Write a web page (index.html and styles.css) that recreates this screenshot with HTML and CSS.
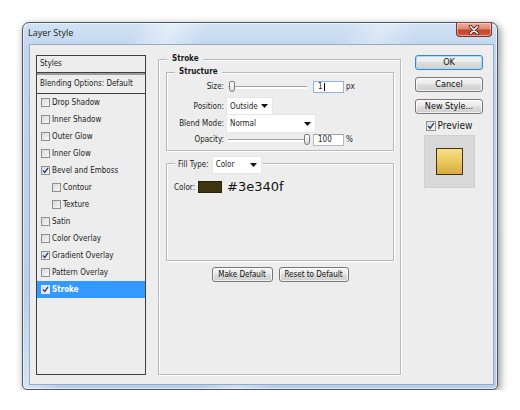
FILE: index.html
```html
<!DOCTYPE html>
<html lang="en">
<head>
<meta charset="utf-8">
<title>Layer Style</title>
<link rel="stylesheet" href="styles.css">
</head>
<body>
<div class="desk">
  <div class="window">
    <div class="titlebar">
      <span class="title">Layer Style</span>
      <button class="close" aria-label="Close">
        <svg width="12" height="10" viewBox="0 0 12 10">
          <path d="M2.5 1.5 L9.5 8.5 M9.5 1.5 L2.5 8.5" stroke="#5b2117" stroke-width="3.2" stroke-linecap="round" fill="none"/>
          <path d="M2.5 1.5 L9.5 8.5 M9.5 1.5 L2.5 8.5" stroke="#ffffff" stroke-width="1.6" stroke-linecap="round" fill="none"/>
        </svg>
      </button>
    </div>
    <div class="client">
      <div class="styles">
        <div class="styles-head">Styles</div>
        <div class="styles-sep"></div>
        <div class="styles-blend">Blending Options: Default</div>
        <ul class="items">
          <li class="item"><span class="cb"></span>Drop Shadow</li>
          <li class="item"><span class="cb"></span>Inner Shadow</li>
          <li class="item"><span class="cb"></span>Outer Glow</li>
          <li class="item"><span class="cb"></span>Inner Glow</li>
          <li class="item"><span class="cb"><svg viewBox="0 0 7 7" width="7" height="7"><path d="M1 3.5 L2.8 5.5 L6 1" fill="none" stroke="#2a3f6e" stroke-width="1.3"/></svg></span>Bevel and Emboss</li>
          <li class="item sub"><span class="cb"></span>Contour</li>
          <li class="item sub"><span class="cb"></span>Texture</li>
          <li class="item"><span class="cb"></span>Satin</li>
          <li class="item"><span class="cb"></span>Color Overlay</li>
          <li class="item"><span class="cb"><svg viewBox="0 0 7 7" width="7" height="7"><path d="M1 3.5 L2.8 5.5 L6 1" fill="none" stroke="#2a3f6e" stroke-width="1.3"/></svg></span>Gradient Overlay</li>
          <li class="item"><span class="cb"></span>Pattern Overlay</li>
          <li class="item selected"><span class="cb"><svg viewBox="0 0 7 7" width="7" height="7"><path d="M1 3.5 L2.8 5.5 L6 1" fill="none" stroke="#3a4660" stroke-width="1.3"/></svg></span>Stroke</li>
        </ul>
      </div>

      <section class="group outer">
        <div class="cap cap-stroke">Stroke</div>
        <section class="group structure">
          <div class="cap cap-structure">Structure</div>
          <div class="rows">
            <div class="row row-size">
              <span class="lbl">Size:</span>
              <div class="slider"><span class="thumb thumb-min"></span></div>
              <span class="field focus">1<span class="caret"></span></span>
              <span class="unit">px</span>
            </div>
            <div class="row row-pos">
              <span class="lbl">Position:</span>
              <div class="select sel-pos"><span>Outside</span><svg width="7" height="4" viewBox="0 0 7 4"><path d="M0 0 H7 L3.5 4 Z" fill="#111"/></svg></div>
            </div>
            <div class="row row-blend">
              <span class="lbl">Blend Mode:</span>
              <div class="select sel-blend"><span>Normal</span><svg width="7" height="4" viewBox="0 0 7 4"><path d="M0 0 H7 L3.5 4 Z" fill="#111"/></svg></div>
            </div>
            <div class="row row-opacity">
              <span class="lbl">Opacity:</span>
              <div class="slider"><span class="thumb thumb-max"></span></div>
              <span class="field">100</span>
              <span class="unit">%</span>
            </div>
          </div>
        </section>
        <section class="group fill">
          <div class="cap cap-fill"><span class="fill-lbl">Fill Type:</span><span class="select sel-fill"><span>Color</span><svg width="7" height="4" viewBox="0 0 7 4"><path d="M0 0 H7 L3.5 4 Z" fill="#111"/></svg></span></div>
          <div class="color-row">
            <span class="color-lbl">Color:</span>
            <span class="swatch"></span>
            <span class="hex">#3e340f</span>
          </div>
        </section>
        <div class="defaults">
          <button class="btn btn-make">Make Default</button>
          <button class="btn btn-reset">Reset to Default</button>
        </div>
      </section>

      <div class="actions">
        <button class="btn big default">OK</button>
        <button class="btn big">Cancel</button>
        <button class="btn big">New Style...</button>
        <label class="preview-check"><span class="cb cb-lg"><svg viewBox="0 0 8 8" width="8" height="8"><path d="M1.2 4 L3.2 6.3 L6.8 1.2" fill="none" stroke="#2a3f6e" stroke-width="1.4"/></svg></span>Preview</label>
        <div class="preview-box"><span class="gold"></span></div>
      </div>
    </div>
  </div>
</div>
</body>
</html>
```

FILE: styles.css
```css
* { box-sizing: border-box; }

html, body {
  margin: 0;
  background: #ffffff;
}

body {
  font-family: "DejaVu Sans Condensed", "DejaVu Sans", sans-serif;
  font-stretch: condensed;
  font-size: 8px;
  color: #1c1c1c;
}

.desk {
  padding: 22px 0 0 22px;
}

.window {
  width: 476px;
  height: 368px;
  border: 1px solid #4b5563;
  border-radius: 7px 7px 5px 5px;
  padding: 0 3px 4px 6px;
  display: flex;
  flex-direction: column;
  background:
    linear-gradient(112deg, rgba(255,255,255,0) 18%, rgba(255,255,255,.45) 24%, rgba(255,255,255,0) 30%, rgba(255,255,255,0) 52%, rgba(255,255,255,.35) 58%, rgba(255,255,255,0) 64%),
    linear-gradient(to bottom, #d1e2f4 0, #c0d6ee 25px, #b6cee9 100%);
  box-shadow: 2px 3px 9px rgba(0,0,0,.45), inset 0 0 0 1px rgba(255,255,255,.55);
}

.titlebar {
  height: 21px;
  display: flex;
  align-items: flex-start;
  justify-content: space-between;
}

.title {
  font-family: "Open Sans", "DejaVu Sans", sans-serif;
  font-stretch: normal;
  font-size: 9px;
  line-height: 12px;
  margin: 4px 0 0 -1px;
  color: #1b1b1b;
}

.close {
  width: 36px;
  height: 15px;
  margin: -1px 2px 0 0;
  padding: 0;
  border: 1px solid #7b3326;
  border-top-color: #8a4a40;
  border-radius: 0 0 4px 4px;
  background: linear-gradient(to bottom, #e8b0a2 0%, #d98a78 45%, #c4442c 55%, #d0593c 100%);
  box-shadow: inset 0 0 0 1px rgba(255,220,210,.55);
  display: flex;
  align-items: center;
  justify-content: center;
}

.client {
  flex: 1;
  border: 1px solid #97abc3;
  background: #ededed;
  display: flex;
  align-items: flex-start;
  padding: 9px 10px 9px 6px;
}

/* styles list */
.styles {
  width: 110px;
  height: 320px;
  margin-top: 1px;
  margin-right: 12px;
  border: 1px solid #3f3f3f;
  background: #ededed;
}

.styles-head {
  height: 17px;
  line-height: 16px;
  padding-left: 3px;
  border-bottom: 1px solid #3f3f3f;
}

.styles-sep {
  height: 2px;
  background: #9c9c9c;
}

.styles-blend {
  height: 19px;
  line-height: 18px;
  padding-left: 3px;
  border-bottom: 1px solid #3f3f3f;
}

.items {
  list-style: none;
  margin: 0;
  padding: 0;
}

.item {
  height: 17px;
  display: flex;
  align-items: center;
  gap: 2px;
  padding-left: 4px;
}

.item.sub {
  padding-left: 15px;
}

.item.selected {
  background: #3399ff;
  color: #ffffff;
  font-weight: bold;
}

.cb {
  width: 9px;
  height: 9px;
  flex: none;
  border: 1px solid #8e8f8f;
  background: linear-gradient(135deg, #d9d9d9, #f7f7f7);
  display: flex;
  align-items: center;
  justify-content: center;
}

.item.selected .cb {
  border-color: #e6eefc;
  background: linear-gradient(135deg, #d2d8e2, #f3f5f8);
}

.cb-lg {
  width: 10px;
  height: 10px;
}

/* group boxes */
.group {
  border: 1px solid #b9b9b9;
  box-shadow: inset 1px 1px 0 #ffffff, 1px 1px 0 #ffffff;
  display: flex;
  flex-direction: column;
  align-items: flex-start;
}

.cap {
  background: #ededed;
  height: 10px;
  line-height: 10px;
  margin-top: -6px;
  font-weight: bold;
  display: flex;
  align-items: center;
}

.outer {
  width: 243px;
  height: 316px;
  margin-top: 5px;
  margin-right: 14px;
  padding: 0 6px 0 7px;
}

.cap-stroke {
  margin-left: 1px;
  padding: 0 4px 0 5px;
}

.structure {
  width: 228px;
  margin-top: 8px;
}

.cap-structure {
  margin-left: 8px;
  padding: 0 4px;
}

.rows {
  padding: 3px 0 4px 0;
}

.row {
  display: flex;
  align-items: center;
}

.row-size { height: 13px; }
.row-pos { height: 16px; margin-top: 5px; }
.row-blend { height: 17px; margin-top: 1px; }
.row-opacity { height: 13px; margin-top: 1px; }

.lbl {
  width: 57px;
  text-align: right;
  flex: none;
}

.slider {
  position: relative;
  width: 79px;
  height: 13px;
  margin-left: 4px;
  flex: none;
}

.slider::before {
  content: "";
  position: absolute;
  left: 0;
  right: 0;
  top: 6px;
  height: 2px;
  border-top: 1px solid #a3a3a3;
  background: #ffffff;
}

.thumb {
  position: absolute;
  top: 1px;
  width: 6px;
  height: 11px;
  border: 1px solid #7d7d7d;
  border-radius: 2px 2px 3px 3px;
  background: linear-gradient(to bottom, #ffffff, #d9d9d9);
}

.thumb-min { left: 1px; }
.thumb-max { left: 76px; }

.field {
  width: 31px;
  height: 12px;
  margin-left: 6px;
  border: 1px solid #b3bac5;
  border-top-color: #9aa2ad;
  background: #ffffff;
  padding-left: 4px;
  line-height: 10px;
  display: flex;
  align-items: center;
  flex: none;
}

.field.focus {
  border-color: #8fb3da;
}

.caret {
  width: 1px;
  height: 8px;
  background: #000;
  margin-left: 1px;
}

.unit {
  margin-left: 2px;
}

.select {
  background: #ffffff;
  height: 16px;
  display: flex;
  align-items: center;
  justify-content: space-between;
  padding: 0 4px 0 3px;
  font-weight: normal;
  flex: none;
  box-shadow: 0 0 0 1px #e6e6e6;
}

.sel-pos { width: 45px; margin-left: 3px; }
.sel-blend { width: 88px; height: 17px; margin-left: 3px; }
.sel-fill { width: 48px; margin-left: 4px; }

/* fill */
.fill {
  width: 228px;
  height: 98px;
  margin-top: 12px;
}

.cap-fill {
  margin-top: -7px;
  margin-left: 8px;
  padding: 0 2px 0 3px;
  height: 16px;
  font-weight: normal;
}

.color-row {
  display: flex;
  align-items: center;
  height: 14px;
  margin-top: 7px;
  padding-left: 7px;
}

.swatch {
  width: 24px;
  height: 12px;
  margin-left: 3px;
  background: #3e340f;
  border: 1px solid #2a230a;
}

.hex {
  font-family: "DejaVu Sans", sans-serif;
  font-stretch: normal;
  font-size: 13px;
  line-height: 14px;
  margin-left: 5px;
  color: #111;
}

.defaults {
  align-self: stretch;
  display: flex;
  justify-content: center;
  gap: 6px;
  margin-top: 6px;
}

/* buttons */
.btn {
  height: 15px;
  padding: 0;
  font-family: "DejaVu Sans Condensed", "DejaVu Sans", sans-serif;
  font-stretch: condensed;
  font-size: 8px;
  line-height: 13px;
  color: #111;
  border: 1px solid #777777;
  border-radius: 3px;
  background: linear-gradient(to bottom, #f4f4f4 0%, #ebebeb 45%, #dddddd 50%, #cfcfcf 100%);
  box-shadow: inset 0 0 0 1px rgba(255,255,255,.7);
}

.btn-make { width: 61px; }
.btn-reset { width: 70px; }

.actions {
  width: 68px;
  margin-top: 1px;
  display: flex;
  flex-direction: column;
  align-items: center;
}

.btn.big {
  width: 68px;
  font-size: 9px;
  margin-bottom: 7px;
}

.btn.default {
  border-color: #3f86c4;
  box-shadow: inset 0 0 0 1px #a9dcf6;
}

.preview-check {
  display: flex;
  align-items: center;
  gap: 2px;
  height: 11px;
  margin-top: -1px;
  font-size: 10px;
  line-height: 11px;
}

.preview-box {
  width: 51px;
  height: 53px;
  margin-top: 4px;
  background: #d9d9d9;
  border: 1px solid #cfcfcf;
  display: flex;
  align-items: center;
  justify-content: center;
}

.gold {
  width: 27px;
  height: 27px;
  border: 1px solid #3e340f;
  background: linear-gradient(to bottom, #f7df86 0%, #eccb62 45%, #d9aa42 100%);
}
```
